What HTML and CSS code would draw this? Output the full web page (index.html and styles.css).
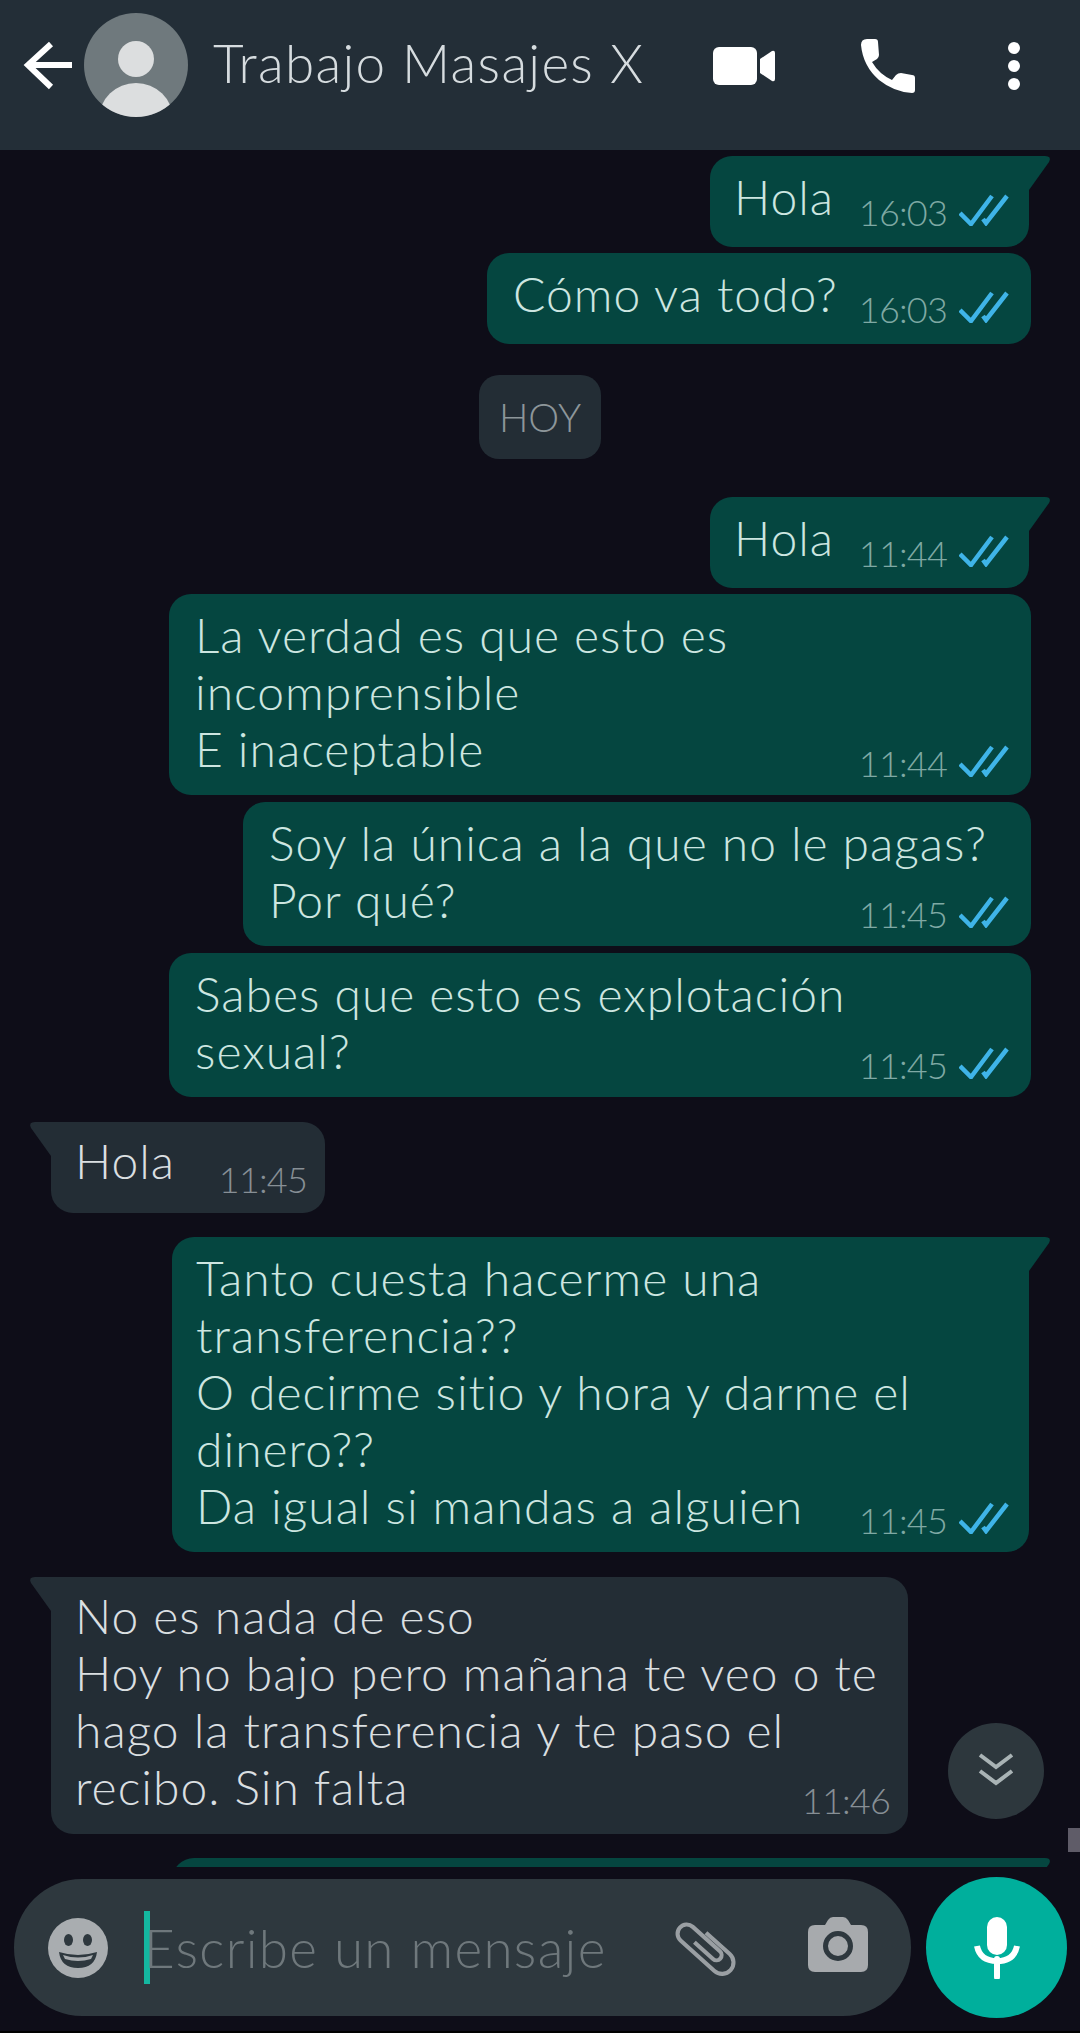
FILE: index.html
```html
<!DOCTYPE html>
<html lang="es">
<head>
    <meta charset="UTF-8">
    <meta name="viewport" content="width=device-width, initial-scale=1.0">
    <title>Trabajo Masajes X</title>
    <link rel="stylesheet" href="styles.css">
</head>
<body>
    <svg class="sprites" width="0" height="0">
        <symbol id="ticks" viewBox="0 0 50 32">
            <path d="M1 19 12 30 33 2M24 25 27 29 48 2" fill="none" stroke="#3fb4e8" stroke-width="4.5"/>
        </symbol>
    </svg>

    <div class="app">
        <header class="topbar">
            <svg class="back" width="60" height="60" viewBox="0 0 60 60">
                <path d="M33 9 10 30 33 52M10 30H54" fill="none" stroke="#fff" stroke-width="6"/>
            </svg>
            <svg class="avatar" width="104" height="104" viewBox="0 0 104 104">
                <clipPath id="avatar-clip"><circle cx="52" cy="52" r="52"/></clipPath>
                <circle cx="52" cy="52" r="52" fill="#6f797d"/>
                <circle cx="52" cy="46" r="18" fill="#dcdedf"/>
                <ellipse cx="52" cy="106" rx="37" ry="36" fill="#dcdedf" clip-path="url(#avatar-clip)"/>
            </svg>
            <h1 class="title">Trabajo Masajes X</h1>
            <div class="actions">
                <svg width="68" height="44" viewBox="0 0 68 44">
                    <rect x="3" y="3" width="44" height="38" rx="6" fill="#fff"/>
                    <path d="M50 15 62 7Q65 6 65 9V35Q65 38 62 37L50 29Z" fill="#fff"/>
                </svg>
                <svg width="60" height="60" viewBox="0 0 60 60">
                    <path d="M3 9Q3 3 9 3H17Q20 3 20 6L21 19Q21 21 19 23L14 26Q21 38 34 44L38 39Q40 37 43 37L54 39Q57 39 57 42V54Q57 57 54 57Q36 56 21 44Q5 30 3 9Z" fill="#fff"/>
                </svg>
                <svg class="more" width="24" height="60" viewBox="0 0 24 60">
                    <circle cx="12" cy="12" r="6" fill="#fff"/>
                    <circle cx="12" cy="30" r="6" fill="#fff"/>
                    <circle cx="12" cy="48" r="6" fill="#fff"/>
                </svg>
            </div>
        </header>

        <main class="chat">
            <div class="msg out tail w-hola first">
                <p class="msg-text">Hola</p>
                <span class="meta">16:03 <svg class="ticks" width="50" height="32"><use href="#ticks"/></svg></span>
            </div>
            <div class="msg out w-como">
                <p class="msg-text">Cómo va todo?</p>
                <span class="meta">16:03 <svg class="ticks" width="50" height="32"><use href="#ticks"/></svg></span>
            </div>

            <div class="day">HOY</div>

            <div class="msg out tail w-hola after-day">
                <p class="msg-text">Hola</p>
                <span class="meta">11:44 <svg class="ticks" width="50" height="32"><use href="#ticks"/></svg></span>
            </div>
            <div class="msg out w-wide">
                <p class="msg-text">La verdad es que esto es<br>incomprensible<br>E inaceptable</p>
                <span class="meta">11:44 <svg class="ticks" width="50" height="32"><use href="#ticks"/></svg></span>
            </div>
            <div class="msg out w-mid">
                <p class="msg-text">Soy la única a la que no le pagas?<br>Por qué?</p>
                <span class="meta">11:45 <svg class="ticks" width="50" height="32"><use href="#ticks"/></svg></span>
            </div>
            <div class="msg out w-wide">
                <p class="msg-text">Sabes que esto es explotación<br>sexual?</p>
                <span class="meta">11:45 <svg class="ticks" width="50" height="32"><use href="#ticks"/></svg></span>
            </div>

            <div class="msg in tail w-hola-in">
                <p class="msg-text">Hola</p>
                <span class="meta">11:45</span>
            </div>

            <div class="msg out tail w-long">
                <p class="msg-text">Tanto cuesta hacerme una<br>transferencia??<br>O decirme sitio y hora y darme el<br>dinero??<br>Da igual si mandas a alguien</p>
                <span class="meta">11:45 <svg class="ticks" width="50" height="32"><use href="#ticks"/></svg></span>
            </div>

            <div class="msg in tail w-long">
                <p class="msg-text">No es nada de eso<br>Hoy no bajo pero mañana te veo o te<br>hago la transferencia y te paso el<br>recibo. Sin falta</p>
                <span class="meta">11:46</span>
            </div>

            <div class="msg out tail w-long"></div>

            <button class="to-bottom" type="button" aria-label="Ir al final">
                <svg width="40" height="44" viewBox="0 0 40 44">
                    <path d="M4 6 20 18 36 6M4 22 20 34 36 22" fill="none" stroke="#a9b3b5" stroke-width="4"/>
                </svg>
            </button>
            <div class="scroll-thumb"></div>
        </main>

        <footer class="footer">
            <div class="composer">
                <svg class="emoji" width="60" height="60" viewBox="0 0 60 60">
                    <circle cx="30" cy="30" r="30" fill="#a9adb0"/>
                    <ellipse cx="20.5" cy="22" rx="4.5" ry="6" fill="#2e383e"/>
                    <ellipse cx="39.5" cy="22" rx="4.5" ry="6" fill="#2e383e"/>
                    <path d="M11 34Q30 40 49 34Q47 50 30 50Q13 50 11 34Z" fill="#2e383e"/>
                    <path d="M15 37Q30 42 45 37L43 41Q30 45 17 41Z" fill="#a9adb0"/>
                </svg>
                <span class="caret"></span>
                <span class="placeholder">Escribe un mensaje</span>
                <svg class="clip" width="70" height="64" viewBox="0 0 70 64">
                    <path transform="translate(35 32) rotate(42) scale(1.14) translate(-29 -10)" d="M20 0H48A10 10 0 0 1 48 20H8A8 8 0 0 1 8 4H40A4.5 4.5 0 0 1 40 13H18" fill="none" stroke="#9a9fa3" stroke-width="3.6"/>
                </svg>
                <svg class="camera" width="60" height="56" viewBox="0 0 60 56">
                    <path d="M7 8H17L20 3Q22 0 25 0H35Q38 0 40 3L43 8H53Q60 8 60 15V48Q60 55 53 55H7Q0 55 0 48V15Q0 8 7 8Z" fill="#a7aaad"/>
                    <circle cx="30" cy="29" r="12.5" fill="none" stroke="#2e383e" stroke-width="5"/>
                </svg>
            </div>
            <button class="mic" type="button" aria-label="Grabar">
                <svg width="46" height="62" viewBox="0 0 46 62">
                    <rect x="13" y="0" width="20" height="38" rx="10" fill="#fff"/>
                    <path d="M3 29Q6 44 23 44Q40 44 43 29" fill="none" stroke="#fff" stroke-width="6"/>
                    <path d="M23 42V60" fill="none" stroke="#fff" stroke-width="6" stroke-linecap="round"/>
                </svg>
            </button>
        </footer>
    </div>
</body>
</html>
```

FILE: styles.css
```css
* {
    box-sizing: border-box;
}

html, body {
    margin: 0;
    padding: 0;
    background-color: #000;
}

body {
    font-family: Lato, "Open Sans", sans-serif;
    font-weight: 300;
}

.sprites {
    position: absolute;
}

.app {
    width: 1080px;
    height: 2031px;
    display: flex;
    flex-direction: column;
    background-color: #0e0d18;
}

/* top bar */
.topbar {
    height: 150px;
    flex: none;
    display: flex;
    align-items: center;
    padding: 0 54px 20px 18px;
    background-color: #232e37;
}

.avatar {
    margin-left: 6px;
    flex: none;
}

.title {
    margin: 0 0 0 25px;
    padding-bottom: 5px;
    font-size: 53px;
    font-weight: 300;
    color: #d6dcdf;
    letter-spacing: 1.3px;
    white-space: nowrap;
}

.actions {
    margin-left: auto;
    padding-top: 2px;
    display: flex;
    align-items: center;
    gap: 80px;
}

.more {
    margin-left: 4px;
}

/* messages */
.chat {
    flex: 1;
    min-height: 0;
    position: relative;
    overflow: hidden;
    display: flex;
    flex-direction: column;
    align-items: flex-end;
    padding-top: 6px;
}

.msg {
    position: relative;
    flex: none;
    display: grid;
    min-height: 91px;
    margin: 6px 49px 0 0;
    padding: 12px 24px 18px 26px;
    border-radius: 22px;
}

.msg-text {
    grid-area: 1 / 1;
    margin: 0;
    font-size: 48px;
    line-height: 57px;
    letter-spacing: 1px;
    white-space: nowrap;
}

.meta {
    grid-area: 1 / 1;
    justify-self: end;
    align-self: end;
    display: flex;
    align-items: center;
    gap: 12px;
    height: 36px;
    margin: 0 -2px -1px 0;
    font-size: 36px;
    line-height: 36px;
    letter-spacing: -0.8px;
    white-space: nowrap;
}

.w-wide .meta,
.w-mid .meta,
.w-long .meta {
    margin-bottom: -4px;
}

.ticks {
    display: block;
    margin-top: -4px;
}

.out {
    background-color: #054640;
    color: #cde6e1;
}

.out .meta {
    color: #7fa9a4;
}

.msg.in {
    align-self: flex-start;
    margin: 25px 0 0 51px;
    padding: 10px 20px 19px 24px;
    background-color: #232d35;
    color: #dadfe1;
}

.msg.in .meta {
    margin-bottom: -3px;
    color: #878f95;
}

.msg.out.tail {
    margin: 24px 51px 0 0;
    padding-right: 22px;
    padding-left: 24px;
    border-top-right-radius: 0;
}

.msg.out.first {
    margin-top: 0;
}

.msg.out.after-day {
    margin-top: 38px;
}

.msg.w-mid,
.msg.w-mid + .msg {
    margin-top: 7px;
}

.in.tail {
    border-top-left-radius: 0;
}

.out.tail::after,
.in.tail::after {
    content: "";
    position: absolute;
    top: 0;
    width: 21px;
    height: 34px;
    background-color: inherit;
}

.out.tail::after {
    left: 100%;
    clip-path: path("M0 0H16Q23 0 20 6L0 34Z");
}

.in.tail::after {
    right: 100%;
    clip-path: path("M21 0H5Q-2 0 1 6L21 34Z");
}

.w-hola { width: 319px; }
.w-como { width: 544px; }
.w-wide { width: 862px; }
.w-mid { width: 788px; }
.w-long { width: 857px; }
.w-hola-in { width: 274px; }

.day {
    align-self: center;
    flex: none;
    width: 122px;
    height: 84px;
    margin: 31px 0 0 0;
    border-radius: 20px;
    background-color: #232d35;
    color: #8d969a;
    font-size: 39px;
    line-height: 84px;
    text-align: center;
}

.to-bottom {
    position: absolute;
    left: 948px;
    top: 1573px;
    width: 96px;
    height: 96px;
    padding: 0;
    border: none;
    border-radius: 50%;
    background-color: #2d373d;
    display: flex;
    align-items: center;
    justify-content: center;
}

.scroll-thumb {
    position: absolute;
    right: 0;
    top: 1678px;
    width: 12px;
    height: 24px;
    background-color: #5f5c68;
}

/* input row */
.footer {
    height: 164px;
    flex: none;
    display: flex;
    align-items: center;
    gap: 15px;
    padding: 10px 13px 13px 14px;
}

.composer {
    flex: 1;
    height: 137px;
    display: flex;
    align-items: center;
    padding: 0 43px 0 34px;
    border-radius: 68px;
    background-color: #2e383e;
}

.caret {
    width: 6px;
    height: 73px;
    margin-left: 36px;
    background-color: #14b7a0;
}

.placeholder {
    margin-left: -6px;
    font-size: 53px;
    color: #6f787c;
    letter-spacing: 1.3px;
    white-space: nowrap;
}

.clip {
    margin-left: auto;
}

.camera {
    margin: 0 0 6px 67px;
}

.mic {
    width: 141px;
    height: 141px;
    flex: none;
    padding: 0;
    border: none;
    border-radius: 50%;
    background-color: #00af9c;
    display: flex;
    align-items: center;
    justify-content: center;
}
```
